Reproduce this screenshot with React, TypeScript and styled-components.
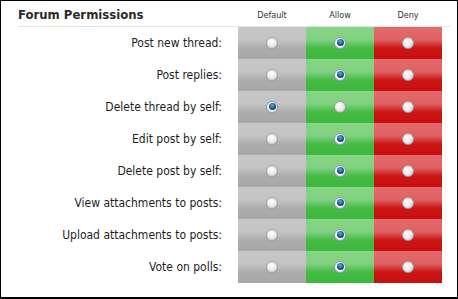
import React from 'react'
import styled, { createGlobalStyle } from 'styled-components'

type Choice = 'default' | 'allow' | 'deny'

const permissions: { label: string; value: Choice }[] = [
    { label: 'Post new thread:', value: 'allow' },
    { label: 'Post replies:', value: 'allow' },
    { label: 'Delete thread by self:', value: 'default' },
    { label: 'Edit post by self:', value: 'allow' },
    { label: 'Delete post by self:', value: 'allow' },
    { label: 'View attachments to posts:', value: 'allow' },
    { label: 'Upload attachments to posts:', value: 'allow' },
    { label: 'Vote on polls:', value: 'allow' },
]

const columns: { key: Choice; title: string }[] = [
    { key: 'default', title: 'Default' },
    { key: 'allow', title: 'Allow' },
    { key: 'deny', title: 'Deny' },
]

const GlobalStyle = createGlobalStyle`
    html, body {
        margin: 0;
        padding: 0;
        background: #ffffff;
    }
`

const Frame = styled.div`
    width: 458px;
    height: 299px;
    box-sizing: border-box;
    border: 1px solid #000;
    border-bottom-width: 2px;
    padding: 0 7px 0 17px;
    background: #fff;
    font-family: 'DejaVu Sans Condensed', 'DejaVu Sans', sans-serif;
    color: #222;
`

const Grid = styled.div`
    display: grid;
    grid-template-columns: 220px 68px 68px 68px 1fr;
`

const Header = styled(Grid)`
    height: 26px;
    align-items: center;
    border-bottom: 1px solid #dfe7ec;
    padding-top: 2px;
    box-sizing: border-box;
`

const Title = styled.h2`
    margin: 0;
    font-size: 13px;
    font-weight: bold;
    color: #2a2a2a;
`

const ColTitle = styled.div`
    text-align: center;
    font-family: 'DejaVu Sans Condensed', 'DejaVu Sans', sans-serif;
    font-size: 9px;
    color: #333;
`

const Row = styled(Grid)`
    height: 32px;
`

const Label = styled.div`
    display: flex;
    align-items: center;
    justify-content: flex-end;
    padding-right: 16px;
    font-size: 12px;
    color: #1e1e1e;
    white-space: nowrap;
`

const gradients: Record<Choice, string> = {
    default: 'linear-gradient(to bottom, #c7c7c7 0%, #c4c4c4 40%, #acacac 66%, #a8a8a8 100%)',
    allow: 'linear-gradient(to bottom, #87d587 0%, #80d180 40%, #43bb43 66%, #3db73d 100%)',
    deny: 'linear-gradient(to bottom, #e36b6b 0%, #df6262 40%, #cd1515 66%, #c90f0f 100%)',
}

const Cell = styled.div<{ kind: Choice }>`
    display: flex;
    align-items: center;
    justify-content: center;
    background: ${p => gradients[p.kind]};
`

const Radio = styled.span<{ checked: boolean }>`
    position: relative;
    width: 12px;
    height: 12px;
    box-sizing: border-box;
    border-radius: 50%;
    border: 1px solid ${p => (p.checked ? '#8c9aa6' : '#a0a0a0')};
    background: ${p =>
        p.checked
            ? '#eef2f5'
            : 'radial-gradient(circle at 40% 35%, #ffffff 0%, #ececec 45%, #c9c9c9 100%)'};
    margin-top: -1px;

    &::after {
        content: '';
        display: ${p => (p.checked ? 'block' : 'none')};
        position: absolute;
        left: 1.5px;
        top: 1.5px;
        width: 7px;
        height: 7px;
        border-radius: 50%;
        background: radial-gradient(circle at 45% 35%, #6aaed6 0%, #1f6494 45%, #0b3356 100%);
    }
`

export default function App() {
    return (
        <>
            <GlobalStyle />
            <Frame>
                <Header>
                    <Title>Forum Permissions</Title>
                    {columns.map(c => (
                        <ColTitle key={c.key}>{c.title}</ColTitle>
                    ))}
                </Header>
                {permissions.map(p => (
                    <Row key={p.label}>
                        <Label>{p.label}</Label>
                        {columns.map(c => (
                            <Cell kind={c.key} key={c.key}>
                                <Radio checked={p.value === c.key} />
                            </Cell>
                        ))}
                    </Row>
                ))}
            </Frame>
        </>
    )
}
